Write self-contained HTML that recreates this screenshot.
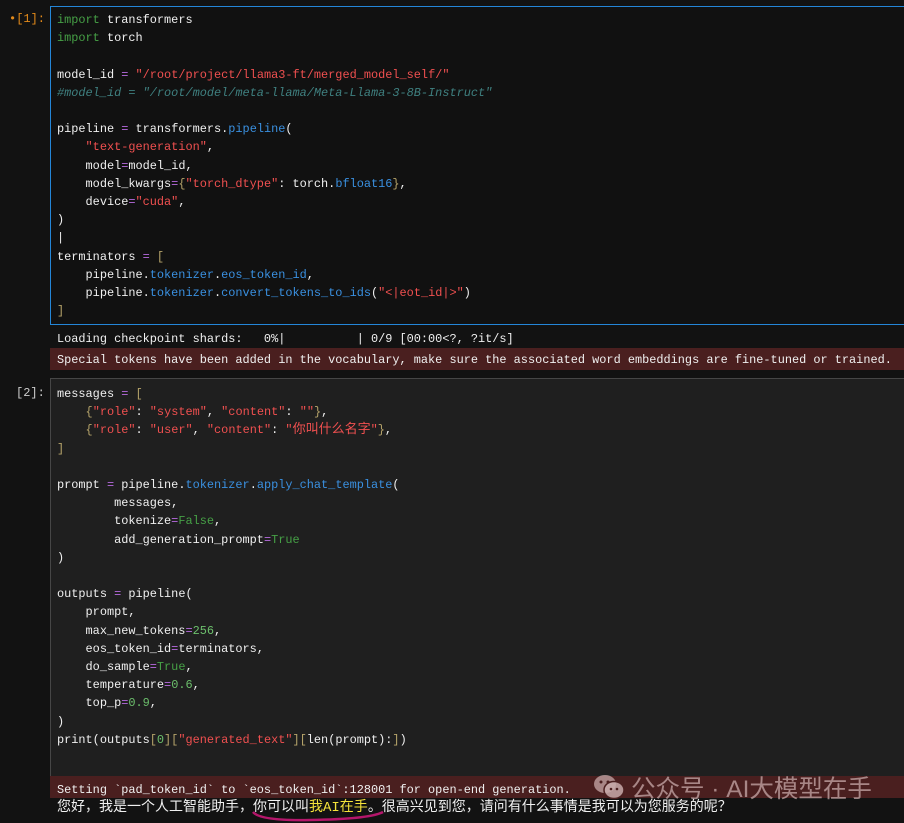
<!DOCTYPE html>
<html><head><meta charset="utf-8"><style>
*{margin:0;padding:0;box-sizing:border-box}
body{width:904px;height:823px;background:#121212;overflow:hidden;position:relative;font-family:"Liberation Mono","Noto Sans CJK SC",monospace;font-size:11.9px;color:#f0f0f0}
.cell{position:absolute;left:50px;right:-2px}
#c1{top:6px;height:319px;background:#111;border:1px solid #2486d8}
#c2{top:378px;height:399px;background:#1f1f1f;border:1px solid #464646}
pre{font-family:inherit;font-size:inherit;line-height:18.2px;position:absolute;left:6px;top:4px;white-space:pre}
.p{position:absolute;font-size:12px}
.k{color:#46a046}.s{color:#f05050}.o{color:#b76be0}.n{color:#6cbf6c}.f{color:#3a90e0}.c{color:#3f8080;font-style:italic}.b{color:#b5a36a}
.out{position:absolute;left:50px;right:0;padding-left:7px;white-space:pre;height:18px;line-height:18px}
.err{background:#4a1f1f}
.cjk{font-size:13px}
</style></head><body>
<div class="p" style="left:9px;top:12px;color:#e38a1a">•[1]:</div>
<div class="cell" id="c1"><pre><span class="k">import</span> transformers
<span class="k">import</span> torch

model_id <span class="o">=</span> <span class="s">"/root/project/llama3-ft/merged_model_self/"</span>
<span class="c">#model_id = "/root/model/meta-llama/Meta-Llama-3-8B-Instruct"</span>

pipeline <span class="o">=</span> transformers.<span class="f">pipeline</span>(
    <span class="s">"text-generation"</span>,
    model<span class="o">=</span>model_id,
    model_kwargs<span class="o">=</span><span class="b">{</span><span class="s">"torch_dtype"</span>: torch.<span class="f">bfloat16</span><span class="b">}</span>,
    device<span class="o">=</span><span class="s">"cuda"</span>,
)
|
terminators <span class="o">=</span> <span class="b">[</span>
    pipeline.<span class="f">tokenizer</span>.<span class="f">eos_token_id</span>,
    pipeline.<span class="f">tokenizer</span>.<span class="f">convert_tokens_to_ids</span>(<span class="s">"&lt;|eot_id|&gt;"</span>)
<span class="b">]</span></pre></div>
<div class="out" style="top:330px">Loading checkpoint shards:   0%|          | 0/9 [00:00&lt;?, ?it/s]</div>
<div class="out err" style="top:348px;height:22px;line-height:24px">Special tokens have been added in the vocabulary, make sure the associated word embeddings are fine-tuned or trained.</div>
<div class="p" style="left:16px;top:386px;color:#ccc">[2]:</div>
<div class="cell" id="c2"><pre style="top:6px">messages <span class="o">=</span> <span class="b">[</span>
    <span class="b">{</span><span class="s">"role"</span>: <span class="s">"system"</span>, <span class="s">"content"</span>: <span class="s">""</span><span class="b">}</span>,
    <span class="b">{</span><span class="s">"role"</span>: <span class="s">"user"</span>, <span class="s">"content"</span>: <span class="s">"<span class="cjk">你叫什么名字</span>"</span><span class="b">}</span>,
<span class="b">]</span>

prompt <span class="o">=</span> pipeline.<span class="f">tokenizer</span>.<span class="f">apply_chat_template</span>(
        messages,
        tokenize<span class="o">=</span><span class="k">False</span>,
        add_generation_prompt<span class="o">=</span><span class="k">True</span>
)

outputs <span class="o">=</span> pipeline(
    prompt,
    max_new_tokens<span class="o">=</span><span class="n">256</span>,
    eos_token_id<span class="o">=</span>terminators,
    do_sample<span class="o">=</span><span class="k">True</span>,
    temperature<span class="o">=</span><span class="n">0.6</span>,
    top_p<span class="o">=</span><span class="n">0.9</span>,
)
print(outputs<span class="b">[</span><span class="n">0</span><span class="b">][</span><span class="s">"generated_text"</span><span class="b">][</span>len(prompt):<span class="b">]</span>)</pre></div>
<div class="out err" style="top:776px;height:22px;line-height:28px">Setting `pad_token_id` to `eos_token_id`:128001 for open-end generation.</div>
<div style="position:absolute;left:592px;top:772px;height:30px;display:flex;align-items:center;color:rgba(200,170,170,.75);font-family:'Liberation Sans','Noto Sans CJK SC',sans-serif;font-size:24.5px">
<svg width="34" height="28" viewBox="0 0 34 28"><ellipse cx="13" cy="11" rx="11" ry="9" fill="rgba(200,170,170,.75)"/><ellipse cx="22" cy="17" rx="10" ry="8.5" fill="rgba(200,170,170,.85)" stroke="#4a1f1f" stroke-width="1.5"/><circle cx="9" cy="9" r="1.5" fill="#4a1f1f"/><circle cx="16" cy="9" r="1.5" fill="#4a1f1f"/><circle cx="19" cy="16" r="1.3" fill="#4a1f1f"/><circle cx="25" cy="16" r="1.3" fill="#4a1f1f"/></svg>
<span style="margin-left:5px">公众号 · AI大模型在手</span></div>
<div class="out" style="top:799px;font-family:'Liberation Mono','Noto Sans CJK SC',monospace;font-size:14px;color:#f0f0f0">您好，我是一个人工智能助手，你可以叫<span style="color:#f4e23a">我AI在手</span>。很高兴见到您，请问有什么事情是我可以为您服务的呢？</div>
<svg style="position:absolute;left:250px;top:809px" width="136" height="14"><path d="M3 3 Q10 12 60 11 Q120 10 133 3" stroke="#b5166b" stroke-width="2.5" fill="none"/></svg>
</body></html>
